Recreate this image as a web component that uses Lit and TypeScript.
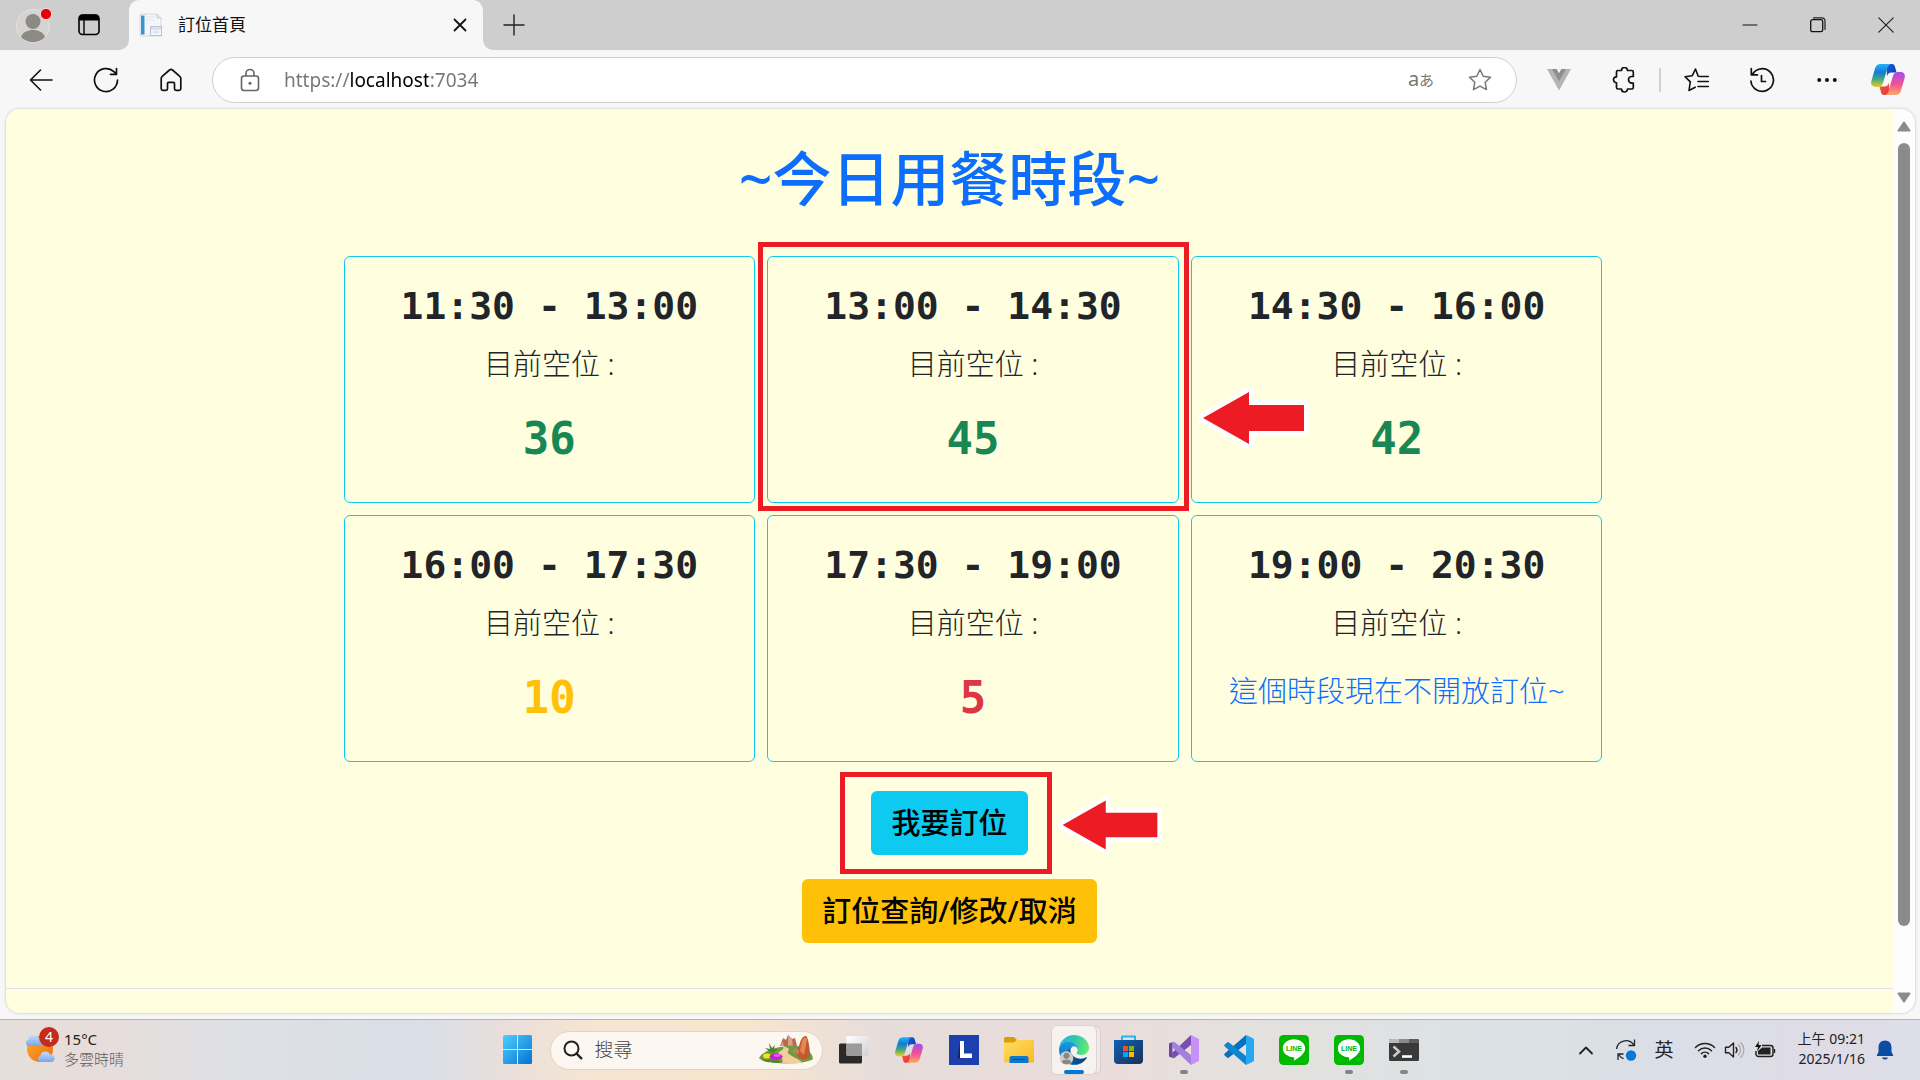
import { LitElement, html, svg, css, nothing } from "lit";
import type { TemplateResult, SVGTemplateResult } from "lit";
import { customElement, property } from "lit/decorators.js";
import { classMap } from "lit/directives/class-map.js";

const icon = (w: number, h: number, body: SVGTemplateResult): TemplateResult =>
  html`<svg class="icon" width=${w} height=${h} viewBox="0 0 ${w} ${h}" fill="none" aria-hidden="true">${body}</svg>`;

const line = (w: number, h: number, d: string, color = "#1b1b1b", width = 1.6) =>
  icon(w, h, svg`<path d=${d} stroke=${color} stroke-width=${width} stroke-linecap="round" stroke-linejoin="round" />`);

/* ---------- browser chrome icons ---------- */

const avatar = icon(36, 36, svg`
  <circle cx="17" cy="19" r="16.5" fill="#d6d4d0" stroke="#e4e2de" />
  <circle cx="17" cy="14.5" r="7.5" fill="#8d8985" />
  <path d="M5 30c2-5 6.500-7 12-7s10 2 12 7c-3 3.300-7.400 5.200-12 5.200S8 33.300 5 30z" fill="#8d8985" />
  <circle cx="30" cy="7" r="5.600" fill="#e6000a" stroke="#f0dcdc" stroke-width="1" />`);

const tabsMenu = icon(22, 22, svg`
  <rect x="1" y="1" width="20" height="19.500" rx="3.500" stroke="#000" stroke-width="1.600" />
  <path d="M1 6.500V4a3.500 3.500 0 0 1 3.500-3.500h13A3.500 3.500 0 0 1 21 4v2.500z" fill="#000" />
  <path d="M6 6v14" stroke="#000" stroke-width="1.400" />`);

const favicon = icon(24, 24, svg`
  <path d="M1 1h17l4 4v18H1z" fill="#f4f6fa" stroke="#d3d8e2" />
  <path d="M18 1v4h4" fill="#dfe4ec" stroke="#c5ccd8" />
  <rect x="2" y="2.500" width="3.500" height="19" fill="#3b93cc" />
  <path d="M7 4h9M7 7h9M7 10h4" stroke="#dfe5ef" />
  <rect x="11.500" y="13.500" width="11" height="9" fill="#f2f5fb" stroke="#b9c2d6" />
  <rect x="12" y="14" width="10" height="3" fill="#d9e1f1" />
  <path d="M14 19h6" stroke="#ccd4e4" />`);

const closeSmall = line(14, 14, "M1.500 1.500l11 11M12.500 1.500l-11 11", "#111", 1.8);
const plus = line(22, 22, "M1 11h20M11 1v20", "#222", 1.4);
const minimise = line(16, 16, "M1 8h14", "#111", 1.2);
const restore = icon(16, 16, svg`
  <rect x=".7" y="2.700" width="12" height="12" rx="1.800" stroke="#111" stroke-width="1.300" />
  <path d="M3.500.8h8.200a3.300 3.300 0 0 1 3.300 3.300v8.400" stroke="#222" stroke-width="1.200" stroke-linecap="round" />`);
const closeLarge = line(16, 16, "M.800.8l14.400 14.400M15.200.8L.8 15.200", "#222", 1.2);

const back = line(24, 24, "M23 12H1.500M11.500 2L1.500 12l10 10", "#111", 1.6);
const refresh = line(26, 26, "M24.500 13a11.500 11.500 0 1 1-3.600-8.300l2.600 2.500M23.500 1.500v5.800h-6", "#111", 1.7);
const home = line(22, 24, "M1.200 10.600c0-.9.400-1.700 1-2.200L9.500 2c.9-.7 2.100-.7 3 0l7.300 6.400c.6.5 1 1.300 1 2.200v10.200c0 .9-.7 1.600-1.600 1.600h-3.100c-.9 0-1.600-.7-1.600-1.600v-5.300c0-.7-.5-1.200-1.200-1.200H8.700c-.7 0-1.200.5-1.200 1.200v5.300c0 .9-.7 1.600-1.600 1.600H2.800c-.9 0-1.600-.7-1.600-1.600z", "#111", 1.7);
const lock = icon(20, 24, svg`
  <rect x="1.500" y="8" width="17" height="14.500" rx="2.500" stroke="#666" stroke-width="1.600" />
  <path d="M6 8V5.500a4 4 0 0 1 8 0V8" stroke="#666" stroke-width="1.600" />
  <circle cx="10" cy="15.200" r="1.500" fill="#666" />`);
const star = line(24, 24, "M12 1.500l3.200 6.700 7.300 1-5.300 5.100 1.300 7.300-6.500-3.500-6.500 3.500 1.300-7.300-5.300-5.100 7.300-1z", "#777", 1.5);
const vue = icon(24, 22, svg`
  <path d="M0 0h5.500L12 11.500 18.500 0H24L12 21.500z" fill="#b4b4b4" />
  <path d="M5 0h4.600L12 4.300 14.400 0H19l-7 12.500z" fill="#8e8e8e" />`);
const puzzle = line(24, 26, "M6 3.500h3.500a3 3 0 0 1 6 0h4.300c.9 0 1.500.6 1.500 1.500v4.500h-1.500a3.300 3.300 0 0 0 0 6.600h1.500v4.400c0 .9-.6 1.500-1.500 1.500h-4.300a3 3 0 0 1-6 0H6c-.9 0-1.500-.6-1.500-1.500v-4.700a3 3 0 0 1 0-6V5c0-.9.6-1.500 1.500-1.500z", "#111", 1.7);
const favourites = line(26, 26, "M16.500 9.500l-2.300-.3L11.500 2 8.300 8.700l-7.300 1 5.300 5.100L5 23.500l6.200-3.300M15.500 9.500h8.800M14 14.500h10.300M14 19.500h10.300", "#111", 1.6);
const history = line(26, 26, "M3.300 7.500A11.300 11.300 0 1 1 1.900 14M2.300 1.500v6.300h6.200M12.500 8.500v6h4", "#111", 1.7);
const dots = icon(20, 6, svg`<circle cx="2.200" cy="3" r="2" fill="#111" /><circle cx="10" cy="3" r="2" fill="#111" /><circle cx="17.800" cy="3" r="2" fill="#111" />`);

const copilot = (w: number, h: number) => html`
  <svg class="icon" width=${w} height=${h} viewBox="0 0 34 31" aria-hidden="true">
    <defs>
      <linearGradient id="cpA" x1="0" y1="0" x2="0" y2="1"><stop offset="0" stop-color="#2bb3f3" /><stop offset=".35" stop-color="#1479d8" /><stop offset=".65" stop-color="#3fa981" /><stop offset="1" stop-color="#f2cb1d" /></linearGradient>
      <linearGradient id="cpB" x1="0" y1="0" x2="0" y2="1"><stop offset="0" stop-color="#a04ff0" /><stop offset=".5" stop-color="#ee5196" /><stop offset="1" stop-color="#ffa765" /></linearGradient>
      <linearGradient id="cpC" x1="0" y1="0" x2="1" y2="1"><stop offset="0" stop-color="#1a5fe0" /><stop offset="1" stop-color="#0c37a8" /></linearGradient>
      <linearGradient id="cpD" x1="0" y1="0" x2="1" y2="1"><stop offset="0" stop-color="#f0622f" /><stop offset="1" stop-color="#e5304a" /></linearGradient>
    </defs>
    <path d="M16 0h5c2 0 2.700 1.500 3.200 3.500l1.300 5h-5c-3 0-4 2-4.600 4z" fill="url(#cpC)" />
    <path d="M18 31h-5c-2 0-2.700-1.500-3.200-3.500L8.500 22.500h5c3 0 4-2 4.600-4z" fill="url(#cpD)" />
    <path d="M9.500 0H20c-2 .5-2.900 2-3.500 4l-4.300 14.500c-.8 2.700-2 4.500-5 4.500H4.500c-4 0-5-3-4-6.500L4 4.500C5 1.500 6.500 0 9.500 0z" fill="url(#cpA)" />
    <path d="M24.500 31H14c2-.5 2.900-2 3.500-4l4.300-14.500c.8-2.700 2-4.500 5-4.500h2.700c4 0 5 3 4 6.500L30 26.500c-1 3-2.500 4.500-5.500 4.500z" fill="url(#cpB)" />
  </svg>`;

/* ---------- taskbar icons ---------- */

const weather = icon(34, 32, svg`
  <defs><linearGradient id="sun" x1="0" y1="0" x2="1" y2="1"><stop stop-color="#fbb02d" /><stop offset="1" stop-color="#ee6a10" /></linearGradient>
  <linearGradient id="cloud" x1="0" y1="0" x2="0" y2="1"><stop stop-color="#c3dcfb" /><stop offset="1" stop-color="#7ba4e8" /></linearGradient></defs>
  <circle cx="16" cy="16" r="13" fill="url(#sun)" />
  <path d="M4 13a3.500 3.500 0 0 1 .3-6.500A5.500 5.500 0 0 1 14.500 5 4 4 0 0 1 17 13z" fill="url(#cloud)" />
  <path d="M16 29a3.300 3.300 0 0 1 .4-6.300 5.200 5.200 0 0 1 9.800-1.200A3.800 3.800 0 0 1 27.500 29z" fill="url(#cloud)" />`);

const start = icon(30, 30, svg`
  <defs><linearGradient id="win" x1="0" y1="0" x2="1" y2="1"><stop stop-color="#4fd0fb" /><stop offset="1" stop-color="#0472d4" /></linearGradient></defs>
  <path d="M1.500 0H14v14H0V1.500Q0 0 1.500 0zM15 0h12.500Q29 0 29 1.500V14H15zM0 15h14v14H1.500Q0 29 0 27.500zM15 15h14v12.500q0 1.500-1.500 1.500H15z" fill="url(#win)" />`);

const magnifier = icon(20, 20, svg`<circle cx="8.500" cy="8.500" r="7" stroke="#222" stroke-width="2" /><path d="M13.500 13.500l4.800 4.800" stroke="#222" stroke-width="2.400" stroke-linecap="round" />`);

const landscape = icon(56, 30, svg`
  <path d="M22 11l3-8 3 2 2-5 4 4 3-1 2 8z" fill="#b9694e" /><path d="M30 0l4 4 1 7h-5zM24 6l2 5h-3z" fill="#dda083" />
  <path d="M1 23C6 15 16 13 28 11c14-2 26 4 27 13-6 5-40 7-54-1z" fill="#6f9c40" />
  <path d="M22 11c6 1 3 4-1 6-3 3 6 6 3 11 8 2 16 1 20-1-5-4-12-6-14-9-1-3 6-5-8-7z" fill="#f1cf9c" />
  <path d="M40 22c-2-2 0-9 2-14 1-5 5-9 7-6 2 5 3 14 3 20-3 3-9 3-12 0z" fill="#c25a31" /><path d="M44 6c2-5 5-4 5-1l-3 15-4-4z" fill="#e68750" />
  <path d="M34 17l3-4 4 2 0 4z" fill="#c57e55" />
  <path d="M12 17L7 13l5 1-1-6 3 5 3-3-1 4 4 0-5 4z" fill="#4b8a2c" />
  <ellipse cx="9" cy="21" rx="4" ry="2.500" fill="#f5e21c" /><ellipse cx="18" cy="21.500" rx="6.500" ry="3" fill="#c818d2" /><ellipse cx="19" cy="20.500" rx="3.500" ry="1.300" fill="#ef5cf3" />
  <path d="M1 23c5 5 13 5 22 5l-2-3-8-1-6 1z" fill="#55852f" />`);

const taskView = icon(30, 28, svg`
  <defs><linearGradient id="tv" x1="0" y1="0" x2="1" y2="1"><stop stop-color="#fff" /><stop offset="1" stop-color="#d2d2d2" /></linearGradient></defs>
  <rect y="7.500" width="23" height="20" rx="1.500" fill="#2b2a29" />
  <rect x="7.500" width="22" height="20" rx="1.500" fill="url(#tv)" />
  <path d="M7.500 7.500H23V20H9Q7.500 20 7.500 18.500z" fill="#9c9b99" />`);

const boxL = icon(30, 30, svg`
  <rect width="30" height="30" fill="#1e3fae" />
  <path d="M11 6L8.500 23.500h5z" fill="#0e2760" />
  <path d="M11 6h4v12.500h8v4.500H11z" fill="#fff" />`);

const folder = icon(30, 28, svg`
  <defs><linearGradient id="fd" x1="0" y1="0" x2="1" y2="1"><stop stop-color="#ffdd68" /><stop offset="1" stop-color="#f9b921" /></linearGradient></defs>
  <path d="M0 2.500Q0 1 1.500 1H10l3 3h17v6H0z" fill="#dc9c08" />
  <path d="M0 6.500h10L13 4h17v22.500H0z" fill="url(#fd)" />
  <path d="M5.500 27v-5Q5.500 20 7.500 20h15q2 0 2 2v5z" fill="#0f78c8" /><path d="M9 23.500h12" stroke="#08508c" stroke-linecap="round" />`);

const edge = html`
  <svg class="icon" width="30" height="30" viewBox="0 0 256 256" aria-hidden="true">
    <defs>
      <linearGradient id="eA" x1="0" y1="0" x2="1" y2="0"><stop stop-color="#0c59a4" /><stop offset="1" stop-color="#0d417e" /></linearGradient>
      <linearGradient id="eB" x1=".6" y1="0" x2=".3" y2="1"><stop stop-color="#1b9de2" /><stop offset="1" stop-color="#0f6cc0" /></linearGradient>
      <linearGradient id="eC" x1="0" y1=".3" x2="1" y2=".5"><stop stop-color="#2ab2e4" /><stop offset=".5" stop-color="#30c6b0" /><stop offset="1" stop-color="#66eb6e" /></linearGradient>
    </defs>
    <path fill="url(#eA)" d="M231 190.500c-3.400 1.800-6.900 3.400-10.500 4.700a101.500 101.500 0 0 1-35.600 6.400c-47 0-87.900-32.300-87.900-73.800a31.500 31.500 0 0 1 16.400-27.300c-42.500 1.800-53.400 46.100-53.400 72 0 73.400 67.600 80.800 82.200 80.800 7.800 0 19.700-2.300 26.800-4.600l1.300-.4a128.300 128.300 0 0 0 66.600-52.800 4 4 0 0 0-5.900-5z" />
    <path fill="url(#eB)" d="M105.700 241.400a79.200 79.200 0 0 1-22.700-21.300 80.700 80.700 0 0 1 29.500-120c3.100-1.500 8.400-4.100 15.500-4a32.400 32.400 0 0 1 25.700 13 31.900 31.900 0 0 1 6.300 18.700c0-.2 24.500-79.600-80-79.600-43.900 0-80 41.600-80 78.200a130.200 130.200 0 0 0 12.100 56 128 128 0 0 0 156.400 67.100 75.500 75.500 0 0 1-62.800-8z" />
    <path fill="url(#eC)" d="M152.300 148.900c-.9 1-3.400 2.500-3.400 5.600 0 2.600 1.700 5.200 4.800 7.300 14.300 10 41.400 8.600 41.500 8.600a59.600 59.600 0 0 0 30.300-8.300 61.400 61.400 0 0 0 30.400-52.900c.3-22.400-8-37.300-11.300-43.900C223.500 23.900 177.700 0 128 0A128 128 0 0 0 0 126.200c.5-36.500 36.800-66 80-66 3.500 0 23.500.3 42 10a72.600 72.600 0 0 1 30.900 29.300c6.100 10.600 7.200 24.100 7.200 29.500s-2.700 13.300-7.800 19.900z" />
    <circle cx="64" cy="196" r="58" fill="#cfcdca" />
    <circle cx="64" cy="178" r="26" fill="#8a8683" />
    <path d="M22 232c8-18 22-24 42-24s34 6 42 24a58 58 0 0 1-84 0z" fill="#8a8683" />
  </svg>`;

const store = icon(30, 30, svg`
  <defs><linearGradient id="st" x1="0" y1="0" x2="1" y2="1"><stop stop-color="#0f62b4" /><stop offset="1" stop-color="#1b2f5a" /></linearGradient></defs>
  <path d="M8 6V1.500h13V6" stroke="#22b7f2" stroke-width="2" stroke-linejoin="round" />
  <path d="M0 5h29v20q0 4-4 4H4q-4 0-4-4z" fill="url(#st)" />
  <path d="M9 11h5v5H9z" fill="#f25022" /><path d="M15 11h5v5h-5z" fill="#7fba00" /><path d="M9 17h5v5H9z" fill="#00a4ef" /><path d="M15 17h5v5h-5z" fill="#ffb900" />`);

const visualStudio = icon(30, 30, svg`
  <path d="M0 8.500L3.500 7v16L0 21.500z" fill="#6c47a3" />
  <path d="M3.500 23Q5 23.500 6 22.500L22 10V0L3 18z" fill="#7950b0" />
  <path d="M3.500 7Q5 6.500 6 7.500L22 20v10L3 12z" fill="#a47fdc" />
  <path d="M22 0l8 4v22l-8 4z" fill="#c792f7" />`);

const vsCode = icon(30, 30, svg`
  <path d="M22 0v9L5 22.500q-1 .8-2 0L.7 20.500q-1-1 0-2z" fill="#0a6fbd" />
  <path d="M22 30v-9L5 7.500q-1-.8-2 0L.7 9.500q-1 1 0 2z" fill="#0f85d1" />
  <path d="M22 0l7 3.200q1 .5 1 1.800v20q0 1.300-1 1.800L22 30z" fill="#2aa7f3" />`);

const lineApp = html`
  <svg class="icon" width="30" height="30" viewBox="0 0 30 30" aria-label="LINE" role="img">
    <rect width="30" height="30" rx="4.500" fill="#00b900" />
    <path d="M15 4.200c6.200 0 11.200 4 11.200 9 0 5.200-5.700 9-11.200 12.600.3-1.800.7-3.400-.6-3.600C8.600 21.900 3.800 18 3.800 13.200c0-5 5-9 11.200-9z" fill="#fff" />
    <text x="15" y="16.200" text-anchor="middle" class="line-text">LINE</text>
  </svg>`;

const terminal = icon(30, 24, svg`
  <rect y="1" width="30" height="22" rx="1.500" fill="#3a3a3a" />
  <path d="M0 5V2.500Q0 1 1.500 1H10v4z" fill="#b9b9b9" /><path d="M10 1h10v4H10z" fill="#8a8a8a" /><path d="M20 1h8.500Q30 1 30 2.500V5H20z" fill="#5c5c5c" />
  <path d="M4.500 8.500l5.500 5-5.500 5" stroke="#c9c9c9" stroke-width="2.600" /><path d="M13 18.500h10" stroke="#fff" stroke-width="2.600" />`);

const chevron = line(16, 10, "M2 8.500l6-6 6 6", "#222", 1.8);
const sync = icon(22, 24, svg`
  <path d="M1.500 11A9.500 9.500 0 0 1 18.500 6.500M19.500 1.500v6h-6M3 22v-6h5.500M4 17c1.200 1.800 2.700 3 4.500 3.700" stroke="#222" stroke-width="1.300" />
  <circle cx="16" cy="17.500" r="5.200" fill="#0a78d6" />`);
const wifi = icon(22, 18, svg`
  <path d="M1.500 6.500a13.500 13.500 0 0 1 19 0M4.500 9.700a9.300 9.300 0 0 1 13 0M7.400 12.600a5.200 5.200 0 0 1 7.200 0" stroke="#222" stroke-width="1.500" stroke-linecap="round" />
  <circle cx="11" cy="15.300" r="1.700" fill="#222" />`);
const speaker = icon(22, 18, svg`
  <path d="M1.500 6.200h3.300L9.500 2v14l-4.700-4.200H1.500z" stroke="#222" stroke-width="1.400" stroke-linejoin="round" />
  <path d="M12 6.500c1.200 1.500 1.200 3.500 0 5" stroke="#222" stroke-width="1.400" stroke-linecap="round" />
  <path d="M14.500 4c2.600 2.800 2.600 7.200 0 10M17 1.800c3.800 4 3.800 10.400 0 14.400" stroke="#aaa" stroke-width="1.300" stroke-linecap="round" />`);
const battery = icon(22, 18, svg`
  <path d="M8 4.500h8.500a2.500 2.500 0 0 1 2.500 2.500v6a2.500 2.500 0 0 1-2.500 2.500h-12A2.500 2.500 0 0 1 2 13v-3" stroke="#222" stroke-width="1.500" />
  <path d="M8 6.500h8.500v7H4v-3.500z" fill="#222" /><path d="M20 8h1.200v4H20z" fill="#222" />
  <path d="M5 0L1 6h3l-1 4.500L7.500 4h-3z" fill="#111" />`);
const bell = icon(18, 20, svg`
  <path d="M9 .5c3.800 0 6.500 2.800 6.500 6.500v5l1.700 3.200q.3.800-.6.800H1.400q-.9 0-.6-.8L2.500 12V7C2.500 3.300 5.200.5 9 .5z" fill="#0a4da3" />
  <path d="M6 17.500h6c-.5 1.500-1.600 2-3 2s-2.500-.5-3-2z" fill="#0a4da3" />`);

const shared = css`
  *, *::before, *::after { box-sizing: border-box; }
  .icon { display: block; flex: none; }
  button { font: inherit; color: inherit; border: 0; padding: 0; margin: 0; background: none; display: flex; align-items: center; justify-content: center; }
`;

const sans = css`"Noto Sans", "Noto Sans CJK TC", sans-serif`;

@customElement("browser-chrome")
export class BrowserChrome extends LitElement {
  static styles = [shared, css`
    :host { display: block; font-family: ${sans}; }
    .titlebar { display: flex; height: 50px; background: #cecece; }
    .lead { display: flex; align-items: center; gap: 26px; padding: 0 29px 0 16px; background: #cecece; border-bottom-right-radius: 10px; }
    .lead-bed { background: #f7f7f7; }
    .lead-bed .lead { height: 100%; }
    .tab { display: flex; align-items: center; flex: 0 1 354px; padding: 0 16px 0 10px; background: #f7f7f7; border-radius: 10px 10px 0 0; font-size: 17px; line-height: 24px; color: #111; }
    .tab-bed { display: flex; flex: 0 1 354px; }
    .tab .name { flex: 1; padding: 0 15px; }
    .rest-bed { flex: 1; background: #f7f7f7; display: flex; }
    .rest { flex: 1; display: flex; align-items: center; justify-content: space-between; background: #cecece; border-bottom-left-radius: 10px; padding-left: 9px; }
    .new { width: 44px; height: 48px; }
    .window { display: flex; }
    .window button { width: 68px; height: 50px; }
    .toolbar { display: flex; align-items: center; height: 59px; padding: 0 4px 0 8px; background: #f7f7f7; }
    .tool { width: 65px; height: 48px; flex: none; }
    .copilot { width: 57px; height: 48px; flex: none; }
    .divider { width: 2px; height: 24px; margin: 0 3px; background: #d0d0d0; }
    .address { flex: 1; min-width: 0; display: flex; align-items: center; height: 46px; margin: 0 9px; padding: 0 24px 0 27px; background: #fff; border: 1px solid #cfcfcf; border-radius: 23px; }
    .url { flex: 1; min-width: 0; margin: 0 24px; padding: 0; border: 0; outline: 0; font: 19px/28px ${sans};
      color: transparent; background: linear-gradient(90deg, #767676 65px, #000 65px, #000 144px, #767676 144px); -webkit-background-clip: text; background-clip: text; }
    .address button { height: 40px; }
    .translate { width: 30px; margin-right: 32px; color: #777; font-size: 20px; line-height: 24px; }
    .translate small { font-size: 15px; }
  `];

  render() {
    return html`
      <div class="titlebar">
        <div class="lead-bed"><div class="lead">
          <button aria-label="設定檔">${avatar}</button>
          <button aria-label="索引標籤動作">${tabsMenu}</button>
        </div></div>
        <div class="tab-bed">
          <div class="tab">${favicon}<span class="name">訂位首頁</span><button aria-label="關閉索引標籤">${closeSmall}</button></div>
        </div>
        <div class="rest-bed"><div class="rest">
          <button class="new" aria-label="新索引標籤">${plus}</button>
          <div class="window">
            <button aria-label="最小化">${minimise}</button>
            <button aria-label="還原">${restore}</button>
            <button aria-label="關閉">${closeLarge}</button>
          </div>
        </div></div>
      </div>
      <div class="toolbar">
        <button class="tool" aria-label="上一頁">${back}</button>
        <button class="tool" aria-label="重新整理">${refresh}</button>
        <button class="tool" aria-label="首頁">${home}</button>
        <div class="address">
          ${lock}
          <input class="url" aria-label="網址" value="https://localhost:7034" />
          <button class="translate" aria-label="翻譯"><span>a<small>あ</small></span></button>
          <button aria-label="加入我的最愛">${star}</button>
        </div>
        <button class="tool" aria-label="Vue">${vue}</button>
        <button class="tool" aria-label="擴充功能">${puzzle}</button>
        <span class="divider"></span>
        <button class="tool" aria-label="我的最愛">${favourites}</button>
        <button class="tool" aria-label="歷程記錄">${history}</button>
        <button class="tool" aria-label="更多">${dots}</button>
        <button class="copilot" aria-label="Copilot">${copilot(34, 31)}</button>
      </div>`;
  }
}

type Tone = "plenty" | "few" | "scarce";

interface Slot {
  time: string;
  seats?: number;
  marked?: boolean;
}

const SLOTS: Slot[] = [
  { time: "11:30 - 13:00", seats: 36 },
  { time: "13:00 - 14:30", seats: 45, marked: true },
  { time: "14:30 - 16:00", seats: 42 },
  { time: "16:00 - 17:30", seats: 10 },
  { time: "17:30 - 19:00", seats: 5 },
  { time: "19:00 - 20:30" },
];

const toneOf = (seats: number): Tone => (seats > 10 ? "plenty" : seats > 5 ? "few" : "scarce");

const arrow = html`
  <svg class="arrow" width="114" height="66" viewBox="0 0 114 66" aria-hidden="true">
    <path d="M7 33L53 7v13h55v26H53v13z" fill="#ed1c24" stroke="#fff" stroke-width="10" stroke-linejoin="round" paint-order="stroke" />
  </svg>`;

@customElement("slot-card")
export class SlotCard extends LitElement {
  @property({ attribute: false }) slotData!: Slot;

  static styles = [shared, css`
    :host { display: block; }
    .card { position: relative; height: 100%; min-height: 247px; padding: 25px 15px; border: 1px solid #0dcaf0; border-radius: 6px; text-align: center; color: #212529; }
    h2 { margin: 0 0 12px; font: 700 38px/48px "DejaVu Sans Mono", monospace; white-space: nowrap; }
    p { margin: 0; font: 300 29px/44px ${sans}; }
    .label { margin-bottom: 28px; }
    .count { font: 700 44px/50px "DejaVu Sans Mono", monospace; }
    .plenty { color: #198754; }
    .few { color: #ffc107; }
    .scarce { color: #dc3545; }
    .closed { color: #0d6efd; line-height: 36px; }
    .frame { position: absolute; inset: -15px -11px -9px -10px; border: 5px solid #ed1c24; }
    .arrow { position: absolute; left: calc(100% + 18px); top: 128px; z-index: 2; }
  `];

  render() {
    const { time, seats, marked } = this.slotData;
    return html`
      <article class="card">
        <h2>${time}</h2>
        <p class="label">目前空位 :</p>
        ${seats === undefined
          ? html`<p class="closed">這個時段現在不開放訂位~</p>`
          : html`<p class=${classMap({ count: true, [toneOf(seats)]: true })}>${seats}</p>`}
        ${marked ? html`<div class="frame"></div>${arrow}` : nothing}
      </article>`;
  }
}

@customElement("booking-page")
export class BookingPage extends LitElement {
  static styles = [shared, css`
    :host { display: flex; margin: 0 5px 6px 6px; border-radius: 14px; overflow: hidden; background: #fdfdfd; box-shadow: 0 0 3px #bbb; font-family: ${sans}; }
    main { flex: 1; min-width: 0; display: flex; flex-direction: column; align-items: center; background: #ffffdf; }
    h1 { margin: 0; padding: 32px 0 40px; font-size: 59px; line-height: 75px; font-weight: 500; color: #0d6efd; }
    .slots { display: grid; grid-template-columns: repeat(3, minmax(0, 1fr)); gap: 12px; width: 100%; max-width: 1306px; padding-left: 47px; }
    .actions { display: flex; flex-direction: column; align-items: center; gap: 24px; padding: 29px 0 24px; }
    .marked { position: relative; }
    .frame { position: absolute; inset: -19px -24px -19px -31px; border: 5px solid #ed1c24; }
    .arrow { position: absolute; left: calc(100% + 28px); top: 2px; width: 107px; height: 64px; }
    .action { height: 64px; padding: 0 20px; border-radius: 6px; font-size: 29px; line-height: 44px; font-weight: 500; color: #000; }
    .book { background: #0dcaf0; }
    .manage { background: #ffc107; }
    footer { align-self: stretch; height: 25px; margin-top: auto; border-top: 1px solid #dee2e6; }
    .scroll { flex: none; width: 22px; display: flex; flex-direction: column; align-items: center; padding: 12px 0 10px; }
    .thumb { flex: 0 1 783px; width: 12px; margin: 11px 0 auto; border-radius: 6px; background: #8b8b8b; }
  `];

  render() {
    return html`
      <main>
        <h1>~今日用餐時段~</h1>
        <section class="slots">${SLOTS.map((s) => html`<slot-card .slotData=${s}></slot-card>`)}</section>
        <div class="actions">
          <div class="marked">
            <button class="action book">我要訂位</button>
            <div class="frame"></div>
            ${arrow}
          </div>
          <button class="action manage">訂位查詢/修改/取消</button>
        </div>
        <footer></footer>
      </main>
      <div class="scroll" aria-hidden="true">
        ${icon(14, 11, svg`<path d="M7 1.500L12.500 9.500h-11z" fill="#8b8b8b" stroke="#8b8b8b" stroke-width="2" stroke-linejoin="round" />`)}
        <span class="thumb"></span>
        ${icon(14, 11, svg`<path d="M7 9.500L12.500 1.500h-11z" fill="#8b8b8b" stroke="#8b8b8b" stroke-width="2" stroke-linejoin="round" />`)}
      </div>`;
  }
}

interface App {
  name: string;
  art: TemplateResult;
  state?: "active" | "running";
}

const APPS: App[] = [
  { name: "工作檢視", art: taskView },
  { name: "Copilot", art: copilot(28, 26) },
  { name: "L", art: boxL },
  { name: "檔案總管", art: folder },
  { name: "Microsoft Edge", art: edge, state: "active" },
  { name: "Microsoft Store", art: store },
  { name: "Visual Studio", art: visualStudio, state: "running" },
  { name: "Visual Studio Code", art: vsCode },
  { name: "LINE", art: lineApp },
  { name: "LINE", art: lineApp, state: "running" },
  { name: "終端機", art: terminal, state: "running" },
];

@customElement("task-bar")
export class TaskBar extends LitElement {
  static styles = [shared, css`
    :host { display: grid; grid-template-columns: 1fr auto 1fr; align-items: center; height: 60px; border-top: 1px solid #b2b2b4; font: 16px/20px ${sans}; color: #222;
      background: linear-gradient(90deg, #e5dfdc 0, #e7dddb 5%, #dde0e4 13%, #dadfe8 22%, #e8dedc 26%, #f6e5d1 31%, #f7e5cf 39%, #e6dddb 46%, #eadddb 57%, #e4e1df 65%, #dce2e4 76%, #dadfe7 86%, #dfdce6 95%, #dddfe8 100%); }
    .weather { display: flex; align-items: center; justify-content: flex-start; gap: 6px; padding: 0 0 2px 24px; text-align: left; font-size: 15px; }
    .weather-icon { position: relative; }
    .badge { position: absolute; left: 15px; top: -6px; width: 20px; height: 20px; border-radius: 50%; background: #c42b1c; color: #fff; font-size: 14px; line-height: 20px; text-align: center; }
    .weather span { display: block; }
    .sky { color: #5c5c5c; font-weight: 300; }
    .apps { display: flex; align-items: center; padding-left: 2px; }
    .app { position: relative; width: 55px; height: 59px; }
    .app .tile { display: flex; align-items: center; justify-content: center; width: 44px; height: 48px; }
    .app.active .tile { background: #f7f2f0; border-radius: 5px; box-shadow: 0 0 1px 1px #dcd3d1, 5px 0 0 -1px #f1e9e8, 5px 0 1px #d5cccb; }
    .app.active::after, .app.running::after { content: ""; position: absolute; left: 50%; top: 49px; width: 8px; height: 4px; margin-left: -4px; border-radius: 2px; background: #858383; }
    .app.active::after { width: 20px; margin-left: -10px; background: #0078d4; }
    .line-text { font: 700 7px "Liberation Sans", sans-serif; fill: #00b900; }
    .search { display: flex; align-items: center; width: 273px; height: 39px; margin: 0 4px; padding: 0 8px 0 12px; border-radius: 20px; background: #fdf7f1; border: 1px solid #e3d3c2; }
    .search input { flex: 1; min-width: 0; margin: 0 12px; padding: 0; border: 0; outline: 0; background: none; font: 300 19px/28px ${sans}; }
    .search input::placeholder { color: #444; opacity: 1; }
    .tray { display: flex; align-items: center; justify-content: flex-end; padding-right: 26px; }
    .overflow { margin-right: 21px; }
    .ime { margin: 0 20px 0 18px; font-size: 19px; line-height: 28px; }
    .status { gap: 8px; margin-right: 22px; }
    .clock { display: block; margin-right: 11px; padding-bottom: 2px; text-align: right; font-size: 14px; }
    .clock span { display: block; }
  `];

  render() {
    return html`
      <button class="weather">
        <span class="weather-icon">${weather}<span class="badge">4</span></span>
        <span><span>15°C</span><span class="sky">多雲時晴</span></span>
      </button>
      <nav class="apps" aria-label="工作列">
        <button class="app" aria-label="開始">${start}</button>
        <label class="search">${magnifier}<input type="text" aria-label="搜尋" placeholder="搜尋" />${landscape}</label>
        ${APPS.map((a) => html`
          <button class=${classMap({ app: true, active: a.state === "active", running: a.state === "running" })} aria-label=${a.name}>
            <span class="tile">${a.art}</span>
          </button>`)}
      </nav>
      <div class="tray">
        <button class="overflow" aria-label="顯示隱藏的圖示">${chevron}</button>
        <button aria-label="同步">${sync}</button>
        <button class="ime">英</button>
        <button class="status" aria-label="網路、音量、電池">${wifi}${speaker}${battery}</button>
        <button class="clock"><span>上午 09:21</span><span>2025/1/16</span></button>
        <button aria-label="通知">${bell}</button>
      </div>`;
  }
}

@customElement("app-root")
export class AppRoot extends LitElement {
  static styles = css`
    :host { display: grid; grid-template-rows: auto 1fr auto; grid-template-columns: minmax(0, 1fr); min-height: 100vh; background: #f7f7f7; }
  `;

  render() {
    return html`<browser-chrome></browser-chrome><booking-page></booking-page><task-bar></task-bar>`;
  }
}
